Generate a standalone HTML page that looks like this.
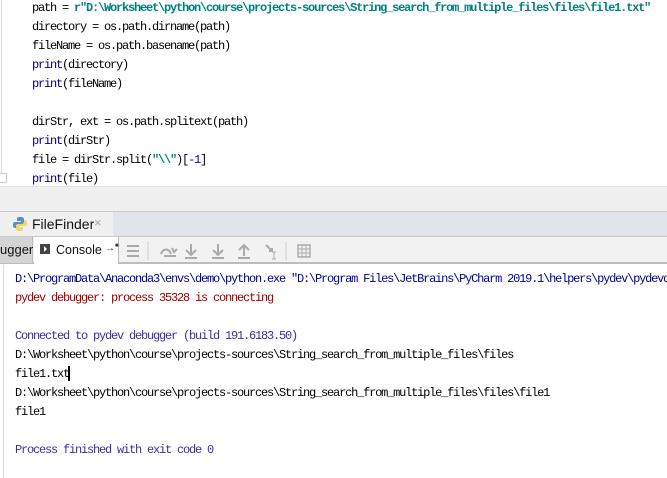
<!DOCTYPE html>
<html><head><meta charset="utf-8"><style>
*{margin:0;padding:0;box-sizing:border-box}
body{width:667px;height:478px;overflow:hidden;background:#fff;position:relative;font-family:"Liberation Mono",monospace}
.m{position:absolute;font-size:12px;letter-spacing:-1.2px;white-space:pre;line-height:14px}
.b{color:#000080}.s{color:#008080;font-weight:bold}.k{color:#000}.n{color:#0000ff}
.abs{position:absolute}
.ui{font-family:"Liberation Sans",sans-serif}
</style></head><body>
<div class="abs" style="left:1px;top:0;width:1px;height:174px;background:#ddd"></div>
<div class="abs" style="left:0;top:173px;width:7px;height:10px;border:1px solid #ccc;border-left:none;background:#fff"></div>
<div class="m k" style="left:32px;top:1px">path = <span class="s">r"D:\Worksheet\python\course\projects-sources\String_search_from_multiple_files\files\file1.txt"</span></div>
<div class="m k" style="left:32px;top:20px">directory = os.path.dirname(path)</div>
<div class="m k" style="left:32px;top:39px">fileName = os.path.basename(path)</div>
<div class="m k" style="left:32px;top:58px"><span class="b">print</span>(directory)</div>
<div class="m k" style="left:32px;top:77px"><span class="b">print</span>(fileName)</div>
<div class="m k" style="left:32px;top:115px">dirStr, ext = os.path.splitext(path)</div>
<div class="m k" style="left:32px;top:134px"><span class="b">print</span>(dirStr)</div>
<div class="m k" style="left:32px;top:153px">file = dirStr.split(<span class="s">"\\"</span>)[<span class="n">-1</span>]</div>
<div class="m k" style="left:32px;top:172px"><span class="b">print</span>(file)</div>

<div class="abs" style="left:0;top:186px;width:667px;height:25px;background:#f0f0f0;border-top:1px solid #e4e4e4"></div>
<div class="abs" style="left:0;top:211px;width:667px;height:26px;background:#e1e4eb;border-top:1px solid #c8c8c8;border-bottom:1px solid #c8c8c8"></div>
<div class="abs" style="left:0;top:212px;width:113px;height:24px;background:#f0f0f0"></div>
<svg class="abs" style="left:12px;top:216px" width="16" height="16" viewBox="0 0 16 16"><path d="M8 1c-3 0-3 1-3 2v2h4v1H3c-2 0-2 2-2 3s0 3 2 3h1V10c0-1 1-2 2-2h4c1 0 2-1 2-2V3c0-1-1-2-4-2z" fill="#5b8ec9"/><path d="M8 15c3 0 3-1 3-2v-2H7v-1h6c2 0 2-2 2-3s0-3-2-3h-1v2c0 1-1 2-2 2H6c-1 0-2 1-2 2v3c0 1 1 2 4 2z" fill="#f2d26a"/></svg>
<div class="abs ui" style="left:32px;top:216px;font-size:14px;color:#111">FileFinder</div>
<div class="abs ui" style="left:94px;top:215px;font-size:13px;color:#aaa">×</div>

<div class="abs" style="left:0;top:237px;width:667px;height:27px;background:#f2f2f2;border-bottom:2px solid #bdbdbd"></div>
<div class="abs" style="left:0;top:237px;width:33px;height:26px;background:#d4d4d4;border-right:1px solid #bbb"></div>
<div class="abs ui" style="left:0;top:242px;font-size:13px;color:#111">ugger</div>
<div class="abs" style="left:34px;top:237px;width:85px;height:27px;background:#fff;border-right:1px solid #bbb"></div>
<div class="abs" style="left:40px;top:244px;width:10px;height:10px;background:#444"></div>
<div class="abs" style="left:44px;top:246px;width:0;height:0;border-left:3px solid #fff;border-top:3px solid transparent;border-bottom:3px solid transparent"></div>
<div class="abs ui" style="left:56px;top:243px;font-size:12.5px;color:#111">Console</div>
<div class="abs ui" style="left:105px;top:243px;font-size:10px;color:#333">→<span style="font-size:6px;vertical-align:4px">■</span></div>
<svg class="abs" style="left:124px;top:240px" width="200" height="22" viewBox="0 0 200 22">
<g stroke="#aaa" stroke-width="2" fill="none">
<path d="M3 6h12M3 11h12M3 16h12"/>
<path d="M24 2v18M162 2v18" stroke="#ccc" stroke-width="1"/>
<path d="M37 14c2-6 8-6 10 0M40 16h12M48 8l2 4 3-3"/>
<path d="M67 4v10M62 10l5 5 5-5M61 18h12"/>
<path d="M94 4v10M89 10l5 5 5-5M88 18h12"/>
<path d="M120 6v10M115 10l5-5 5 5M114 18h12"/>
<path d="M142 5l6 6M145 11h3v-3"/>
<path d="M150 12v7M148 12h4M148 19h4" stroke-width="1"/>
<rect x="174" y="5" width="12" height="12" stroke-width="1.5"/><path d="M174 9h12M174 13h12M178 5v12M182 5v12" stroke-width="1"/>
</g></svg>

<div class="abs" style="left:3px;top:265px;width:1px;height:213px;background:#ddd"></div>
<div class="m" style="left:15px;top:272px;color:#00008b">D:\ProgramData\Anaconda3\envs\demo\python.exe "D:\Program Files\JetBrains\PyCharm 2019.1\helpers\pydev\pydevd.py"</div>
<div class="m" style="left:15px;top:291px;color:#a00000">pydev debugger: process 35328 is connecting</div>
<div class="m" style="left:15px;top:329px;color:#3a2fa0">Connected to pydev debugger (build 191.6183.50)</div>
<div class="m k" style="left:15px;top:348px">D:\Worksheet\python\course\projects-sources\String_search_from_multiple_files\files</div>
<div class="m k" style="left:15px;top:367px">file1.txt</div>
<div class="abs" style="left:68px;top:366px;width:2px;height:15px;background:#000"></div>
<div class="m k" style="left:15px;top:386px">D:\Worksheet\python\course\projects-sources\String_search_from_multiple_files\files\file1</div>
<div class="m k" style="left:15px;top:405px">file1</div>
<div class="m" style="left:15px;top:443px;color:#3a2fa0">Process finished with exit code 0</div>
</body></html>
